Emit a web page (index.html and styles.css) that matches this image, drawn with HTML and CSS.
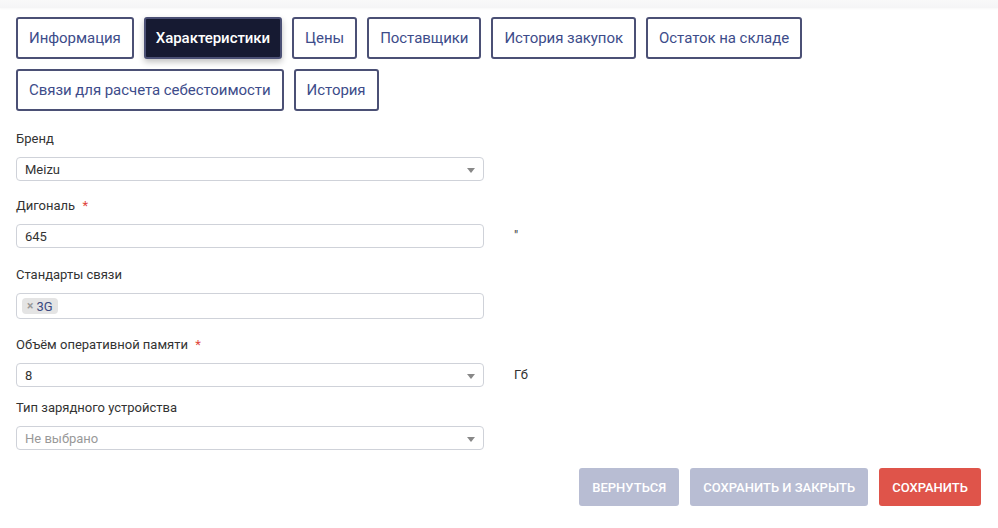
FILE: index.html
```html
<!DOCTYPE html>
<html lang="ru">
<head>
<meta charset="utf-8">
<title>Характеристики</title>
<link rel="stylesheet" href="styles.css">
</head>
<body>
<div class="topbar"></div>
<main class="page">
  <nav class="tabs">
    <button class="tab">Информация</button>
    <button class="tab tab--active">Характеристики</button>
    <button class="tab">Цены</button>
    <button class="tab">Поставщики</button>
    <button class="tab">История закупок</button>
    <button class="tab">Остаток на складе</button>
    <button class="tab">Связи для расчета себестоимости</button>
    <button class="tab">История</button>
  </nav>

  <form class="form">
    <div class="group sp-a">
      <label class="label">Бренд</label>
      <div class="row">
        <div class="field select"><span class="value">Meizu</span><span class="arrow"></span></div>
      </div>
    </div>
    <div class="group sp-b">
      <label class="label">Дигональ <span class="req">*</span></label>
      <div class="row">
        <div class="field"><span class="value">645</span></div>
        <span class="unit">"</span>
      </div>
    </div>
    <div class="group sp-c">
      <label class="label">Стандарты связи</label>
      <div class="row">
        <div class="field field--multi"><span class="tag"><span class="tag-x">×</span>3G</span></div>
      </div>
    </div>
    <div class="group sp-d">
      <label class="label">Объём оперативной памяти <span class="req">*</span></label>
      <div class="row">
        <div class="field select"><span class="value">8</span><span class="arrow"></span></div>
        <span class="unit">Гб</span>
      </div>
    </div>
    <div class="group sp-e">
      <label class="label">Тип зарядного устройства</label>
      <div class="row">
        <div class="field select"><span class="value placeholder">Не выбрано</span><span class="arrow"></span></div>
      </div>
    </div>
  </form>

  <div class="actions">
    <button class="btn btn--muted">Вернуться</button>
    <button class="btn btn--muted">Сохранить и закрыть</button>
    <button class="btn btn--danger">Сохранить</button>
  </div>
</main>
</body>
</html>
```
FILE: styles.css
```css
* { box-sizing: border-box; }
html, body { margin: 0; padding: 0; background: #fff; }
body {
  font-family: Roboto, "Liberation Sans", Arial, sans-serif;
  color: #333;
  width: 998px;
  height: 528px;
  overflow: hidden;
}
.topbar {
  height: 8px;
  background: linear-gradient(#f9f9f9, #f5f5f6);
  box-shadow: 0 1px 2px rgba(0,0,0,0.03);
}
.page {
  padding: 0 17px 0 16px;
}
.tabs {
  display: flex;
  flex-wrap: wrap;
  gap: 10px;
  margin-top: 9px;
  width: 820px;
}
.tab {
  height: 42px;
  padding: 0 11px;
  border: 2px solid #4b5075;
  border-radius: 3px;
  background: #fff;
  color: #3d4c8a;
  font-family: Roboto, "Liberation Sans", Arial, sans-serif;
  font-size: 15px;
  font-weight: 400;
  line-height: 20px;
  letter-spacing: -0.05px;
  cursor: pointer;
}
.tab--active {
  padding: 0 10px;
  background: #161a32;
  color: #fff;
  font-weight: 500;
  box-shadow: 0 3px 6px rgba(0,0,0,0.25);
}
.form {
  margin-top: 19px;
}
.group { display: flex; flex-direction: column; }
.sp-a { margin-bottom: 16px; }
.sp-b { margin-bottom: 18px; }
.sp-c { margin-bottom: 17px; }
.sp-d { margin-bottom: 12px; }
.sp-e { margin-bottom: 18px; }
.label {
  font-size: 13px;
  line-height: 18px;
  color: #333;
  margin-bottom: 9px;
}
.req { color: #e0453b; margin-left: 4px; }
.row {
  display: flex;
  align-items: center;
  gap: 30px;
}
.field {
  position: relative;
  width: 468px;
  height: 24px;
  border: 1px solid #cfd2d9;
  border-radius: 4px;
  display: flex;
  align-items: center;
  padding: 0 8px;
  font-size: 13px;
  color: #333;
}
.field--multi {
  height: 26px;
  padding: 0 5px;
}
.select .arrow {
  position: absolute;
  right: 8px;
  top: 10px;
  width: 0;
  height: 0;
  border-left: 4px solid transparent;
  border-right: 4px solid transparent;
  border-top: 5px solid #888;
}
.placeholder { color: #999; }
.tag {
  display: inline-flex;
  align-items: center;
  height: 16px;
  padding: 0 5px 0 5px;
  background: #e4e4e4;
  border-radius: 4px;
  font-size: 13px;
  color: #3b4a80;
}
.tag-x {
  color: #999;
  font-weight: 700;
  font-size: 12px;
  margin-right: 3px;
}
.unit {
  font-size: 13px;
  color: #333;
  line-height: 18px;
}
.actions {
  display: flex;
  justify-content: flex-end;
  gap: 11px;
}
.btn {
  height: 38px;
  padding: 0 13px;
  border: none;
  border-radius: 3px;
  color: #fff;
  font-family: Roboto, "Liberation Sans", Arial, sans-serif;
  font-size: 13px;
  font-weight: 500;
  text-transform: uppercase;
  cursor: pointer;
}
.btn--muted { background: #b8bdd3; }
.btn--danger { background: #df544a; }
```
